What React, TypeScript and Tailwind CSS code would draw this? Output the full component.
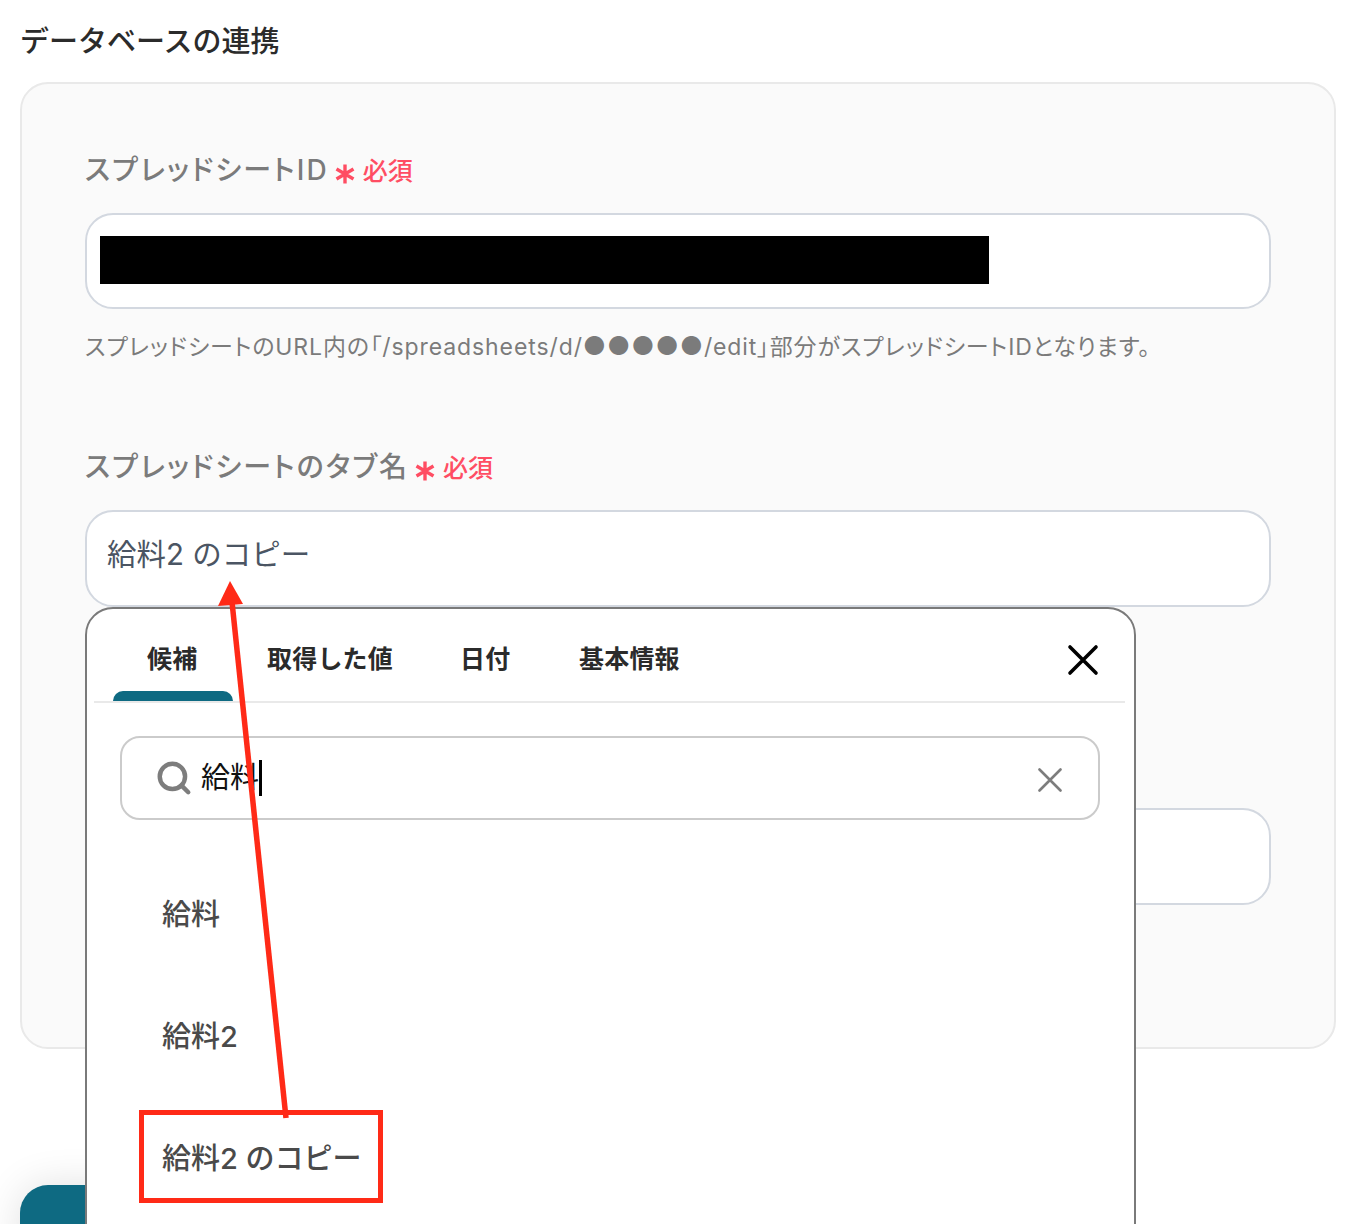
import { Search } from 'lucide-react';

const font = { fontFamily: 'Inter, "Noto Sans CJK JP", sans-serif' };

function Required() {
  return (
    <span className="flex items-center ml-[6px] text-[#ff4d63] font-medium tracking-normal">
      <svg className="mt-[8px]" width="20" height="20" viewBox="0 0 20 20" fill="none" stroke="#ff4d63" strokeWidth="3.4">
        <path d="M10 0.5 V19.5 M1.5 5 L18.5 15 M18.5 5 L1.5 15" />
      </svg>
      <span className="text-[25px] ml-[8px] mt-[2px]">必須</span>
    </span>
  );
}

function Label({ children }: { children: string }) {
  return (
    <div className="flex items-center h-[40px] text-[28px] leading-none tracking-[2.1px] text-[#7b7b7b] font-medium [font-feature-settings:'palt']">
      <span>{children}</span>
      <Required />
    </div>
  );
}

const tabs = [
  { name: '候補', width: 'w-[120px]' },
  { name: '取得した値', width: 'w-[193px]' },
  { name: '日付', width: 'w-[119px]' },
  { name: '基本情報', width: 'w-[120px]' },
];

export default function App() {
  return (
    <div className="relative w-[1368px] h-[1224px] overflow-hidden bg-white" style={font}>
      <h1 className="pt-[22px] pl-[20px] h-[82px] text-[29px] leading-[40px] font-medium text-[#2b2b2b]">データベースの連携</h1>

      {/* Form card */}
      <div className="ml-[20px] w-[1316px] h-[967px] rounded-[28px] border-2 border-[#e9e9e9] bg-[#fafafa] pt-[66px] pl-[63px]">
        <Label>スプレッドシートID</Label>
        <div className="mt-[23px] w-[1186px] h-[96px] rounded-[28px] border-2 border-[#d3d8e0] bg-white flex items-center pl-[13px] pb-[2px]">
          <div className="w-[889px] h-[48px] bg-black" />
        </div>
        <p className="mt-[21px] h-[34px] text-[23px] leading-[34px] tracking-[0.9px] text-[#7b7b7b] whitespace-nowrap [font-feature-settings:'palt']">
          スプレッドシートのURL内の「/spreadsheets/d/<span className="text-[25.5px] leading-none">●●●●●</span>/edit」部分がスプレッドシートIDとなります。
        </p>

        <div className="mt-[83px]">
          <Label>スプレッドシートのタブ名</Label>
        </div>
        <div className="mt-[23px] w-[1186px] h-[97px] rounded-[28px] border-2 border-[#d3d8e0] bg-white flex items-center pl-[20px] pb-[8px] text-[29.5px] text-[#4b5563]">
          給料2 のコピー
        </div>

        <div className="mt-[201px] w-[1186px] h-[97px] rounded-[28px] border-2 border-[#d3d8e0] bg-white" />
      </div>

      {/* Next button, mostly covered by the popup */}
      <div className="mt-[136px] ml-[20px] w-[300px] h-[100px] rounded-[28px] bg-[#0e6a82] shadow-[0_0_40px_rgba(0,0,0,0.12)]" />

      {/* Suggestion popup */}
      <div className="absolute left-[85px] top-[607px] w-[1051px] h-[700px] rounded-[28px] border-2 border-[#7a7a7a] bg-white">
        <div className="relative ml-[7px] mr-[9px] h-[94px] border-b-2 border-[#e9e9e9] flex items-start pt-[30px] pl-[53px] text-[25px] leading-[40px] font-semibold text-[#2b2b2b] tracking-[0.2px]">
          {tabs.map(t => (
            <span key={t.name} className={t.width}>{t.name}</span>
          ))}
          <div className="absolute left-[19px] bottom-0 w-[120px] h-[10px] rounded-t-[10px] bg-[#0e6a82]" />
          <svg className="absolute left-[973px] top-[35px]" width="32" height="32" viewBox="0 0 32 32" fill="none" stroke="#000" strokeWidth="3.6" strokeLinecap="round">
            <path d="M3 3 L29 29 M29 3 L3 29" />
          </svg>
        </div>

        <div className="relative mt-[33px] ml-[33px] w-[980px] h-[84px] rounded-[20px] border-2 border-[#cbcbcb] flex items-center pl-[33px]">
          <Search className="w-[38px] h-[38px] text-[#7d7d7d]" strokeWidth={2.8} />
          <span className="ml-[8px] mb-[1px] text-[29px] leading-none text-[#111]">給料</span>
          <span className="w-[3px] h-[36px] bg-black" />
          <svg className="absolute right-[36px] top-[30px]" width="24" height="24" viewBox="0 0 24 24" fill="none" stroke="#7d7d7d" strokeWidth="2.6" strokeLinecap="round">
            <path d="M1.5 1.5 L22.5 22.5 M22.5 1.5 L1.5 22.5" />
          </svg>
        </div>

        <ul className="mt-[34px] pl-[75px] text-[29px] font-medium text-[#4a4a4a]">
          <li className="h-[122px] flex items-center">給料</li>
          <li className="h-[122px] flex items-center">給料2</li>
          <li className="h-[122px] flex items-center">給料2 のコピー</li>
        </ul>
      </div>

      {/* Annotation: red box and arrow */}
      <div className="absolute left-[139px] top-[1110px] w-[244px] h-[93px] border-[5px] border-[#ff2a17]" />
      <svg className="absolute left-0 top-0 pointer-events-none" width="1368" height="1224" viewBox="0 0 1368 1224" fill="none">
        <path d="M286 1118 L232 602" stroke="#ff2a17" strokeWidth="5.5" />
        <path d="M230 581 L218 606 L243 604 Z" fill="#ff2a17" />
      </svg>
    </div>
  );
}
